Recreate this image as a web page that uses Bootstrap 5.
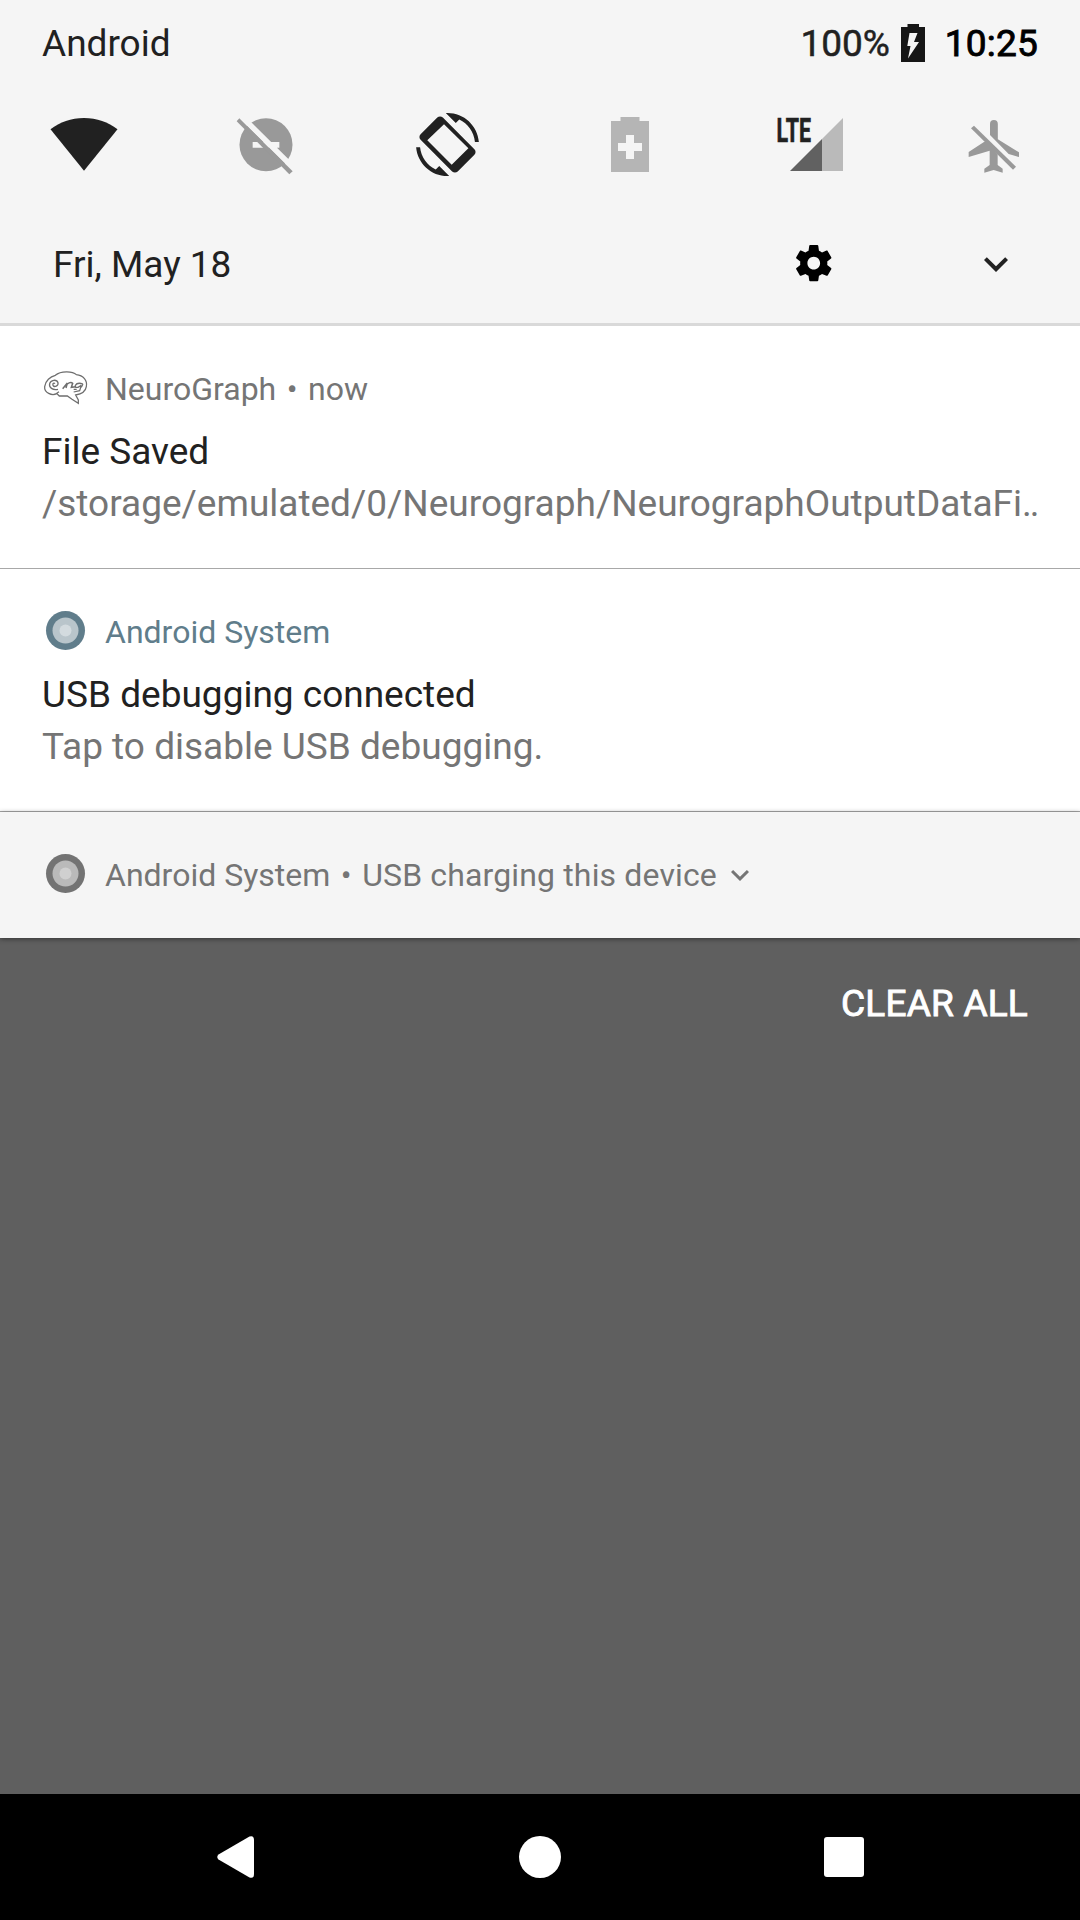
<!DOCTYPE html>
<html lang="en">
<head>
<meta charset="utf-8">
<meta name="viewport" content="width=device-width, initial-scale=1">
<title>Notification shade</title>
<link href="https://cdn.jsdelivr.net/npm/bootstrap@5.3.0/dist/css/bootstrap.min.css" rel="stylesheet">
<style>
body{font-family:Roboto,"Noto Sans",sans-serif;font-size:37px;line-height:43px;color:#212121;background:#5f5f5f;overflow:hidden}
.screen{width:1080px;height:1920px}
svg{display:block;flex:none;overflow:visible}
.quick{background:#f5f5f5;height:326px;border-bottom:3px solid #d9d9d9}
.statusbar{height:86px;padding:0 42px}
.pct{-webkit-text-stroke:.5px #212121}
.batt{margin:0 20px 0 11px}
.clock{color:#000;letter-spacing:.2px;-webkit-text-stroke:.9px #000}
.tiles{height:118px;padding:0 50px 0 48px}
.lte{font:700 32.3px Roboto,sans-serif}
.daterow{height:119px;padding:0 60px 0 53px}
.date{padding-top:2px}
.gear{margin-right:137px}
.note{background:#fff;height:243px;padding:42px 42px 0;border-bottom:1px solid #a8a8a8}
.note-head{font-size:32px;line-height:42px;color:#757575}
.note-head svg:first-child{margin-right:17px}
.note .note-head{margin-bottom:16px}
.dot{margin:0 2.6px}
.wide{letter-spacing:.14px}
.note-line{line-height:52px;white-space:nowrap}
.note-head.sys{color:#607d8b}
.sub{color:#757575}
.tail{letter-spacing:-2px}
.mini{background:#f5f5f5;height:126px;padding:0 42px;box-shadow:0 1px 5px rgba(0,0,0,.45)}
.more{margin-left:5px}
.clear{color:#fff;padding:44px 52px 0 0;letter-spacing:.2px;-webkit-text-stroke:.9px #fff}
.navbtns{height:126px;background:#000;padding:0 216px 0 217px}
</style>
</head>
<body>
<div class="screen d-flex flex-column">
  <header class="quick d-flex flex-column">
    <div class="statusbar d-flex align-items-center">
      <span class="me-auto">Android</span>
      <span class="pct">100%</span>
      <svg class="batt" width="24" height="38" viewBox="0 0 24 38"><path fill="#161616" d="M6.500 0h11.500v3h6v35H0V3h6.500z"/><path fill="#f5f5f5" d="M8.500 9h8l-3.500 9h5L7 34.500l2.500-12.500H6.300z"/></svg>
      <span class="clock">10:25</span>
    </div>
    <div class="tiles d-flex align-items-center justify-content-between">
      <svg width="72" height="72" viewBox="48 109 72 72"><path fill="#212121" d="M84 170.700L50.500 129.300C60 122 71 118 84 118s24 4 33.500 11.300z"/></svg>
      <svg width="72" height="72" viewBox="230 109 72 72"><g transform="translate(230 105) scale(.33333)"><circle cx="108" cy="119" r="79.500" fill="#999"/><path fill="#f5f5f5" d="M68 111h80v17H68zM40 28L200 187V210L28 40z"/><path fill="#999" d="M28 40L188 199L178 208L20 49z"/></g></svg>
      <svg width="72" height="72" viewBox="412 109 72 72"><g fill="#212121" transform="translate(416 113) scale(2.625)"><path d="M16.480 2.520c3.270 1.550 5.610 4.720 5.970 8.480h1.500C23.440 4.840 18.290 0 12 0l-.66.030 3.810 3.810 1.330-1.320z"/><path fill-rule="evenodd" d="M10.230 1.750c-.59-.59-1.540-.59-2.120 0L1.750 8.110c-.59.59-.59 1.540 0 2.120l12.020 12.020c.59.59 1.540.59 2.120 0l6.360-6.360c.59-.59.59-1.540 0-2.120L10.230 1.750zM10.670 4.300L19.950 13.450L13.600 19.700L4.300 10.400z"/><path d="M7.520 21.480C4.250 19.940 1.910 16.760 1.550 13H.05C.56 19.160 5.710 24 12 24l.66-.03-3.810-3.810-1.330 1.320z"/></g></svg>
      <svg width="72" height="72" viewBox="594 109 72 72"><path fill="#b5b5b5" d="M620.500 117h19v4H649v51H611v-51h9.500z"/><path fill="#f5f5f5" d="M626 135h8v8h8v8h-8v8h-8v-8h-8v-8h8z"/></svg>
      <svg width="72" height="72" viewBox="776 109 72 72"><path fill="#bababa" d="M822 139L843 118V171H822z"/><path fill="#616161" d="M822 139V171H790z"/><text class="lte" x="776.500" y="142.300" textLength="34.500" lengthAdjust="spacingAndGlyphs" fill="#212121" stroke="#212121" stroke-width=".6">LTE</text></svg>
      <svg width="72" height="72" viewBox="958 109 72 72"><g fill="#999" transform="translate(770 105) scale(.33333)"><path d="M660 90V57a11.500 11.500 0 0 1 23.500 0V103L747 142V156L716 147z"/><path d="M603 70L612 62L738 185L729 194z"/><path d="M643 110L596 141V156L659 137V180L643 191V203L671 195L698 203V191L683 180V148L650 110z"/></g></svg>
    </div>
    <div class="daterow d-flex align-items-center">
      <span class="date me-auto">Fri, May 18</span>
      <svg class="gear" width="43.500" height="43.500" viewBox="0 .3 24 24"><path d="M19.430 12.980c.04-.32.070-.64.070-.98s-.03-.66-.07-.98l2.110-1.650c.19-.15.240-.42.120-.64l-2-3.460c-.12-.22-.39-.3-.61-.22l-2.490 1c-.52-.4-1.080-.73-1.690-.98l-.38-2.650C14.460 2.180 14.250 2 14 2h-4c-.25 0-.46.180-.49.420l-.38 2.650c-.61.250-1.170.590-1.690.98l-2.490-1c-.23-.09-.49 0-.61.220l-2 3.460c-.13.220-.07.490.12.640l2.110 1.650c-.04.320-.07.650-.07.980s.030.660.070.980l-2.110 1.650c-.19.150-.24.420-.12.640l2 3.460c.12.220.39.300.61.220l2.490-1c.52.400 1.080.730 1.690.980l.38 2.650c.03.240.24.420.49.420h4c.25 0 .46-.18.490-.42l.38-2.650c.61-.25 1.170-.59 1.690-.98l2.490 1c.23.090.49 0 .61-.22l2-3.460c.12-.22.070-.49-.12-.64l-2.110-1.650zM12 15.500c-1.930 0-3.500-1.570-3.500-3.500s1.570-3.500 3.500-3.500 3.500 1.570 3.500 3.500-1.570 3.500-3.500 3.500z"/></svg>
      <svg width="48" height="48" viewBox="0 0 24 24"><path fill="#212121" d="M16.590 8.590L12 13.170 7.410 8.590 6 10l6 6 6-6z"/></svg>
    </div>
  </header>

  <section class="note">
    <div class="note-head d-flex align-items-center">
      <svg width="46" height="42" viewBox="18 24 138 126" fill="none" stroke="#6e6e6e" stroke-width="3.800"><path d="M62 101C48 108 24 99 26 80C28 62 43 50 58 46C74 32 110 33 121 44C142 46 155 62 151 80C149 93 139 102 119 105L127 120V130L108 118L94 108H70L62 100L69 95"/><path d="M66 88C50 92 38 82 41 71C44 59 62 57 66 68C68 78 55 83 51 76C49 70 54 68 57 71"/><path stroke-width="4.500" d="M80 86L94 69L90 84M94 72Q104 64 110 70L106 82L120 80"/><path d="M141 72Q124 66 118 76Q116 84 126 82L136 76M135 79L131 92L113 96M113 88H122M141 72L136 82"/></svg>
      <span>NeuroGraph <span class="dot">•</span> now</span>
    </div>
    <div class="note-line">File Saved</div>
    <div class="note-line sub">/storage/emulated/0/Neurograph/NeurographOutputDataFi<span class="tail">..</span></div>
  </section>

  <section class="note">
    <div class="note-head sys d-flex align-items-center">
      <svg width="46" height="42" viewBox="0 0 46 42"><circle cx="23.500" cy="19.500" r="19.500" fill="#607d8b"/><circle cx="23.500" cy="19.500" r="13" fill="#b9c5cb"/><circle cx="23.500" cy="19.500" r="6" fill="#d3dbdf"/></svg>
      <span>Android System</span>
    </div>
    <div class="note-line">USB debugging connected</div>
    <div class="note-line sub">Tap to disable USB debugging.</div>
  </section>

  <section class="mini d-flex align-items-center">
    <div class="note-head d-flex align-items-center">
      <svg width="46" height="42" viewBox="0 0 46 42"><circle cx="23.500" cy="19.500" r="19.500" fill="#737373"/><circle cx="23.500" cy="19.500" r="13" fill="#bababa"/><circle cx="23.500" cy="19.500" r="6" fill="#d0d0d0"/></svg>
      <span>Android System <span class="dot">•</span> <span class="wide">USB charging this device</span></span>
      <svg class="more" width="36" height="36" viewBox="0 0 24 24"><path fill="#757575" d="M16.590 8.590L12 13.170 7.410 8.590 6 10l6 6 6-6z"/></svg>
    </div>
  </section>

  <div class="clear text-end">CLEAR ALL</div>

  <nav class="navbtns d-flex align-items-center justify-content-between mt-auto">
    <svg width="38" height="42" viewBox="0 0 38 42"><path fill="#fff" d="M1.500 18.500L32.500 .5Q37 -1 37 4V38Q37 43 32.500 41.500L1.500 23.500Q-1 21 1.500 18.500z"/></svg>
    <svg width="42" height="42" viewBox="0 0 42 42"><circle cx="21" cy="21" r="21" fill="#fff"/></svg>
    <svg width="40" height="40" viewBox="0 0 40 40"><rect width="40" height="40" rx="3" fill="#fff"/></svg>
  </nav>
</div>
<script src="https://cdn.jsdelivr.net/npm/bootstrap@5.3.0/dist/js/bootstrap.bundle.min.js"></script>
</body>
</html>
